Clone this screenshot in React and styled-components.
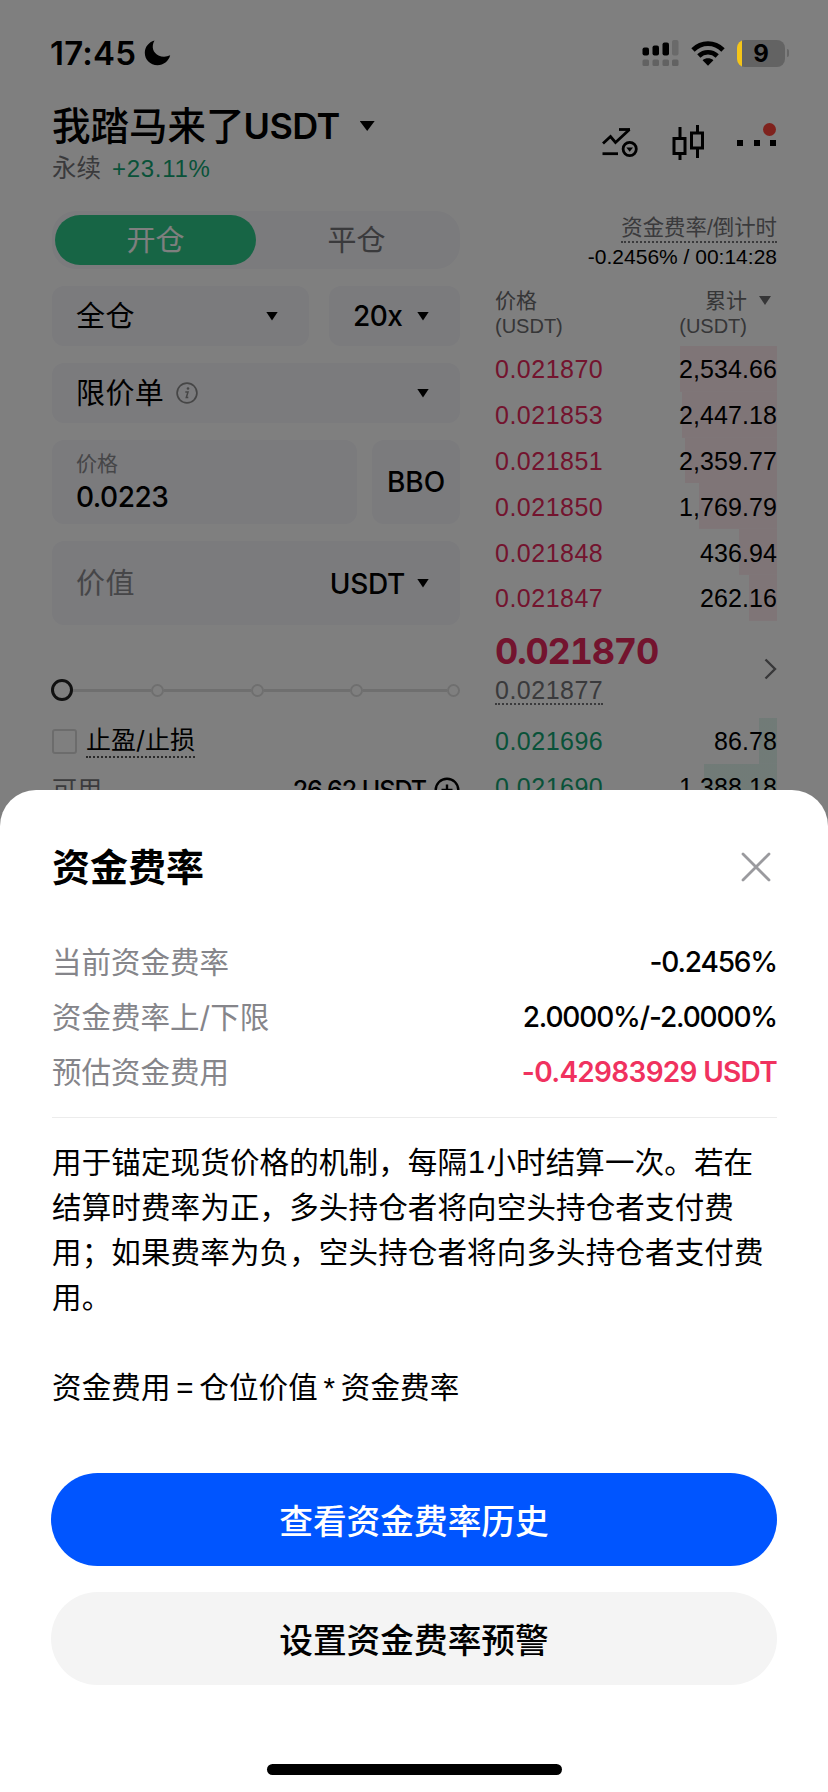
import React from 'react'
import styled, { createGlobalStyle } from 'styled-components'

const asks = [
    { price: '0.021870', total: '2,534.66', depth: 97 },
    { price: '0.021853', total: '2,447.18', depth: 95 },
    { price: '0.021851', total: '2,359.77', depth: 92 },
    { price: '0.021850', total: '1,769.79', depth: 78 },
    { price: '0.021848', total: '436.94', depth: 38 },
    { price: '0.021847', total: '262.16', depth: 28 },
]

const bids = [
    { price: '0.021696', total: '86.78', depth: 18 },
    { price: '0.021690', total: '1,388.18', depth: 73 },
]

function App() {
    return (
        <Screen>
            <GlobalStyle />
            <StatusBar />
            <Header />
            <Body>
                <OrderForm />
                <OrderBook />
            </Body>
            <Overlay />
            <StatusIcons />
            <FundingSheet />
        </Screen>
    )
}

export default App

function StatusBar() {
    return (
        <Status>
            <Clock>17:45</Clock>
            <svg width="27" height="26" viewBox="0 0 27 26">
                <path d="M10.5 0.6C7 6.5 9 13 14.5 15.5C18.500 17.300 22.500 17 26.200 15.300C24.600 21.300 19.600 25.200 13.500 25.200C6.200 25.200 0.800 19.800 0.800 12.800C0.800 7.200 4.600 2.300 10.500 0.600Z" fill="#000" />
            </svg>
        </Status>
    )
}

function StatusIcons() {
    return (
        <StatusRight>
            <svg width="37" height="28" viewBox="0 0 37 28">
                <rect x="0.500" y="8.500" width="6.500" height="8" rx="2" fill="#000" />
                <rect x="10.500" y="6.500" width="6.500" height="10" rx="2" fill="#000" />
                <rect x="20.500" y="3.500" width="6.500" height="13" rx="2" fill="#000" />
                <rect x="30" y="1" width="6.500" height="15.500" rx="2" fill="#6a6a6a" />
                <rect x="0.500" y="20.500" width="6.500" height="6.500" rx="1.500" fill="#626262" />
                <rect x="10.500" y="20.500" width="6.500" height="6.500" rx="1.500" fill="#626262" />
                <rect x="20.500" y="20.500" width="6.500" height="6.500" rx="1.500" fill="#626262" />
                <rect x="30" y="20.500" width="6.500" height="6.500" rx="1.500" fill="#626262" />
            </svg>
            <svg width="34" height="25" viewBox="0 0 34 25">
                <path d="M2 9C10.500 0.600 23.500 0.600 32 9" fill="none" stroke="#000" strokeWidth="4.800" />
                <path d="M7.800 15C13 10 21 10 26.200 15" fill="none" stroke="#000" strokeWidth="4.600" />
                <path d="M11.600 19.200C14.700 16.600 19.300 16.600 22.400 19.200L17 24.800Z" fill="#000" />
            </svg>
            <Battery>
                <BatteryBox><span>9</span></BatteryBox>
                <BatteryNub />
            </Battery>
        </StatusRight>
    )
}

function Header() {
    return (
        <Top>
            <div>
                <Pair>
                    我踏马来了<b>USDT</b>
                    <Caret $w={15} $h={10} />
                </Pair>
                <PairInfo>
                    永续<Change>+23.11%</Change>
                </PairInfo>
            </div>
            <HeaderIcons>
                <svg width="38" height="32" viewBox="0 0 38 32" fill="none" stroke="#000" strokeWidth="2.800">
                    <path d="M2 16.500L9.500 9.500L14.500 15.500L28.500 2.500" />
                    <path d="M18 2.500H29" />
                    <path d="M1.500 26.700H17" />
                    <circle cx="28.700" cy="22" r="6.600" />
                    <path d="M25.300 20.500H32L28.700 24.700Z" fill="#000" stroke="none" />
                </svg>
                <svg width="33" height="36" viewBox="0 0 33 36" fill="none" stroke="#000" strokeWidth="3">
                    <rect x="2" y="13.500" width="11" height="15" />
                    <path d="M8 2V13.500M8 28.500V35" />
                    <rect x="19.500" y="8" width="11" height="15" />
                    <path d="M25.500 0V8M25.500 23V33" />
                </svg>
                <More>
                    <i /><i /><i />
                    <RedDot />
                </More>
            </HeaderIcons>
        </Top>
    )
}

function OrderForm() {
    return (
        <Form>
            <Tabs>
                <Tab $active>开仓</Tab>
                <Tab>平仓</Tab>
            </Tabs>
            <FieldRow>
                <Field $w={257} $h={60}>
                    <FieldText>全仓</FieldText>
                    <Caret $w={12} $h={9} $end={6} />
                </Field>
                <Field $w={131} $h={60}>
                    <Digits>20x</Digits>
                    <Caret $w={12} $h={9} $end={6} />
                </Field>
            </FieldRow>
            <FieldRow>
                <Field $w={408} $h={60}>
                    <FieldText>限价单</FieldText>
                    <Info width="22" height="22" viewBox="0 0 22 22">
                        <circle cx="11" cy="11" r="9.900" fill="none" stroke="#8c8c8c" strokeWidth="1.700" />
                        <circle cx="12" cy="6.500" r="1.300" fill="#8c8c8c" />
                        <path d="M9.300 10H12L10.300 15.600H12.300" fill="none" stroke="#8c8c8c" strokeWidth="1.500" />
                    </Info>
                    <Caret $w={12} $h={9} $end={6} />
                </Field>
            </FieldRow>
            <FieldRow>
                <Field $w={305} $h={84}>
                    <PriceInput>
                        <label>价格</label>
                        <Digits>0.0223</Digits>
                    </PriceInput>
                </Field>
                <Field $w={88} $h={84} $center>BBO</Field>
            </FieldRow>
            <FieldRow>
                <Field $w={408} $h={84}>
                    <Placeholder>价值</Placeholder>
                    <Unit>USDT</Unit>
                    <Caret $w={12} $h={9} $end={6} />
                </Field>
            </FieldRow>
            <Slider>
                <Thumb />
                <Track $grow={0.91} /><Stop />
                <Track $grow={1} /><Stop />
                <Track $grow={1} /><Stop />
                <Track $grow={0.98} /><Stop />
            </Slider>
            <TpSl>
                <Checkbox />
                <Dotted>止盈/止损</Dotted>
            </TpSl>
            <Available>
                <span>可用</span>
                <strong>26.62 USDT</strong>
                <svg width="26" height="26" viewBox="0 0 26 26" fill="none" stroke="#000" strokeWidth="2.400">
                    <circle cx="13" cy="13" r="11.300" />
                    <path d="M13 7.500V18.500M7.500 13H18.500" />
                </svg>
            </Available>
        </Form>
    )
}

function OrderBook() {
    return (
        <Book>
            <RateLabel><span>资金费率/倒计时</span></RateLabel>
            <RateValue>-0.2456% / 00:14:28</RateValue>
            <BookHead>
                <div>价格<br /><em>(USDT)</em></div>
                <TotalHead>
                    <div>累计<br /><em>(USDT)</em></div>
                    <Caret $w={12} $h={9} $color="#6c6c6f" />
                </TotalHead>
            </BookHead>
            {asks.map((row) => (
                <BookRow key={row.price} $depth={row.depth} $tint="rgba(245,50,95,0.1)">
                    <Price $color="#e6285c">{row.price}</Price>
                    <span>{row.total}</span>
                </BookRow>
            ))}
            <LastPrice>
                <div>
                    <Last>0.021870</Last>
                    <Mark>0.021877</Mark>
                </div>
                <svg width="13" height="22" viewBox="0 0 13 22" fill="none" stroke="#707073" strokeWidth="2.400">
                    <path d="M1.500 1.500L11 11L1.500 20.500" />
                </svg>
            </LastPrice>
            {bids.map((row) => (
                <BookRow key={row.price} $depth={row.depth} $tint="rgba(20,180,125,0.12)">
                    <Price $color="#12a573">{row.price}</Price>
                    <span>{row.total}</span>
                </BookRow>
            ))}
        </Book>
    )
}

function FundingSheet() {
    return (
        <Sheet>
            <SheetHead>
                <h2>资金费率</h2>
                <svg width="30" height="30" viewBox="0 0 30 30" fill="none" stroke="#9a9a9e" strokeWidth="2.800" strokeLinecap="round">
                    <path d="M2 2L28 28M28 2L2 28" />
                </svg>
            </SheetHead>
            <Details>
                <DetailRow>
                    <Label>当前资金费率</Label>
                    <Value>-0.2456%</Value>
                </DetailRow>
                <DetailRow>
                    <Label>资金费率上/下限</Label>
                    <Value>2.0000%/-2.0000%</Value>
                </DetailRow>
                <DetailRow>
                    <Label>预估资金费用</Label>
                    <Value $fee>-0.42983929 USDT</Value>
                </DetailRow>
            </Details>
            <Description>
                用于锚定现货价格的机制，每隔1小时结算一次。若在<br />
                结算时费率为正，多头持仓者将向空头持仓者支付费<br />
                用；如果费率为负，空头持仓者将向多头持仓者支付费<br />
                用。
            </Description>
            <Formula>资金费用 = 仓位价值 * 资金费率</Formula>
            <Actions>
                <PrimaryButton>查看资金费率历史</PrimaryButton>
                <SecondaryButton>设置资金费率预警</SecondaryButton>
            </Actions>
            <HomeBar />
        </Sheet>
    )
}

const GlobalStyle = createGlobalStyle`
    * {
        box-sizing: border-box;
    }
    body {
        margin: 0;
        background: #fff;
        font-family: Inter, "Noto Sans CJK SC", sans-serif;
    }
    svg {
        display: block;
        flex: none;
    }
`

const numberFont = '"Liberation Sans", "Noto Sans CJK SC", sans-serif'

const Screen = styled.div`
    position: relative;
    width: 828px;
    height: 1792px;
    overflow: hidden;
    background: #fff;
    color: #000;
`

const Overlay = styled.div`
    position: absolute;
    inset: 0;
    background: rgba(0, 0, 0, 0.5);
`

const Status = styled.div`
    display: flex;
    align-items: center;
    height: 106px;
    padding-left: 50px;
    gap: 8px;
`

const Clock = styled.span`
    width: 86px;
    font-size: 33px;
    font-weight: 600;
    letter-spacing: 0.2px;
    white-space: nowrap;
`

/* sits above the dimmer so the battery keeps its bright fill */
const StatusRight = styled.div`
    position: absolute;
    top: 38px;
    right: 39px;
    height: 30px;
    display: flex;
    align-items: center;
    gap: 12px;
`

const Battery = styled.div`
    display: flex;
    align-items: center;
    gap: 2px;
`

const BatteryBox = styled.div`
    width: 48px;
    height: 27px;
    border-radius: 8px;
    background: linear-gradient(90deg, #f5c518 4.500px, #636363 4.500px);
    text-align: center;
    font-size: 24px;
    line-height: 27px;
    font-weight: 700;
`

const BatteryNub = styled.div`
    width: 2px;
    height: 8px;
    border-radius: 0 2px 2px 0;
    background: #666;
`

const Top = styled.div`
    display: flex;
    justify-content: space-between;
    height: 105px;
    padding: 0 51px 0 52px;
`

const Pair = styled.div`
    display: flex;
    align-items: center;
    height: 40px;
    font-size: 38.500px;
    line-height: 40px;
    font-weight: 500;

    b {
        font-size: 36px;
        font-weight: 600;
        margin: 0 20px 0 -1px;
        letter-spacing: -0.6px;
    }
`

const PairInfo = styled.div`
    margin-top: 7px;
    font-size: 24.500px;
    line-height: 30px;
    color: #747478;
`

const Change = styled.span`
    margin-left: 11px;
    font-family: ${numberFont};
    font-size: 24px;
    letter-spacing: 0.7px;
    color: #12a573;
`

const Caret = styled.i`
    flex: none;
    width: ${(p) => p.$w}px;
    height: ${(p) => p.$h}px;
    margin-right: ${(p) => p.$end || 0}px;
    background: ${(p) => p.$color || '#000'};
    clip-path: polygon(0 0, 100% 0, 50% 100%);
`

const HeaderIcons = styled.div`
    display: flex;
    align-items: center;
    height: 73px;
    gap: 32.500px;
`

const More = styled.div`
    position: relative;
    display: flex;
    justify-content: space-between;
    width: 39px;
    margin-right: 1px;

    i {
        width: 6px;
        height: 6px;
        background: #000;
    }
`

const RedDot = styled.div`
    position: absolute;
    right: 0;
    top: -17px;
    width: 13px;
    height: 13px;
    border-radius: 50%;
    background: #ff453a;
`

const Body = styled.div`
    display: flex;
    justify-content: space-between;
    padding: 0 51px 0 52px;
`

const Form = styled.div`
    width: 408px;
`

const Tabs = styled.div`
    display: flex;
    height: 58px;
    padding: 4px 3px;
    border-radius: 24px;
    background: #f6f6fa;
    margin-bottom: 17px;
`

const Tab = styled.div`
    flex: 1;
    height: 50px;
    border-radius: 25px;
    text-align: center;
    font-size: 29px;
    line-height: 51px;
    color: ${(p) => (p.$active ? '#fff' : '#747478')};
    background: ${(p) => (p.$active ? '#2fcb8b' : 'transparent')};
`

const FieldRow = styled.div`
    display: flex;
    justify-content: space-between;
    margin-bottom: 17px;
`

const Field = styled.div`
    display: flex;
    align-items: center;
    justify-content: ${(p) => (p.$center ? 'center' : 'flex-start')};
    width: ${(p) => p.$w}px;
    height: ${(p) => p.$h}px;
    padding: ${(p) => (p.$center ? 0 : '0 25px 0 24px')};
    border-radius: 12px;
    background: #f6f6fb;
    font-size: ${(p) => (p.$center ? 28 : 29)}px;
    line-height: 42px;
    font-weight: ${(p) => (p.$center ? 500 : 400)};

    > ${Caret} {
        margin-left: auto;
    }
`

const FieldText = styled.span`
    padding-top: 2px;
    letter-spacing: 0.400px;
`

const Info = styled.svg`
    margin-left: 12px;
`

const PriceInput = styled.div`
    display: flex;
    flex-direction: column;
    padding-bottom: 3px;

    label {
        font-size: 21px;
        line-height: 32px;
        color: #8c8c90;
    }
`

const Digits = styled.span`
    font-size: 28px;
    line-height: 34px;
    font-weight: 500;
    letter-spacing: -0.5px;
`

const Placeholder = styled(FieldText)`
    flex: 1;
    color: #8c8c90;
`

const Unit = styled.span`
    padding-top: 2px;
    margin-right: 12px;
    font-size: 28px;
    font-weight: 500;
    letter-spacing: -0.3px;
`

const Slider = styled.div`
    display: flex;
    align-items: center;
    height: 22px;
    margin-top: 54px;
`

const Thumb = styled.div`
    width: 22px;
    height: 22px;
    margin-left: -1px;
    border: 3px solid #222;
    border-radius: 50%;
`

const Track = styled.div`
    flex: ${(p) => p.$grow};
    height: 3px;
    background: #dedede;
`

const Stop = styled.div`
    width: 13px;
    height: 13px;
    border: 2px solid #dedede;
    border-radius: 50%;
`

const TpSl = styled.div`
    display: flex;
    align-items: center;
    height: 30px;
    margin-top: 25px;
    font-size: 25px;
`

const Checkbox = styled.div`
    width: 25px;
    height: 25px;
    margin-right: 9px;
    border: 2px solid #d9d9d9;
    border-radius: 3px;
`

const Dotted = styled.span`
    line-height: 31px;
    border-bottom: 2px dotted #555;
`

const Available = styled.div`
    display: flex;
    align-items: center;
    height: 30px;
    margin-top: 19px;
    font-size: 25px;
    line-height: 30px;
    color: #747478;

    strong {
        margin: 0 8px 0 auto;
        color: #000;
        font-weight: 500;
        letter-spacing: -1px;
    }
`

const Book = styled.div`
    width: 282px;
    font-family: ${numberFont};
`

const RateLabel = styled.div`
    height: 32px;
    padding-top: 5px;
    text-align: right;
    font-size: 21.400px;
    line-height: 25px;
    color: #747478;

    span {
        display: inline-block;
        border-bottom: 2px dotted #747478;
    }
`

const RateValue = styled.div`
    text-align: right;
    font-size: 21px;
    line-height: 26px;
    margin-top: 1px;
    white-space: nowrap;
`

const BookHead = styled.div`
    display: flex;
    justify-content: space-between;
    height: 58px;
    margin: 18px 0 0;
    font-size: 21px;
    line-height: 25px;
    color: #6c6c6f;

    em {
        font-style: normal;
        font-size: 20px;
    }
`

const TotalHead = styled.div`
    display: flex;
    margin-right: 6px;
    gap: 12px;
    text-align: right;

    ${Caret} {
        margin-top: 8px;
    }
`

const BookRow = styled.div`
    display: flex;
    align-items: center;
    justify-content: space-between;
    height: 45.800px;
    padding-top: 2px;
    font-size: 25px;
    letter-spacing: 0.1px;
    background: linear-gradient(${(p) => p.$tint}, ${(p) => p.$tint}) right / ${(p) => p.$depth}px 100% no-repeat;
`

const Price = styled.span`
    letter-spacing: 0.5px;
    color: ${(p) => p.$color};
`

const LastPrice = styled.div`
    display: flex;
    align-items: center;
    justify-content: space-between;
    height: 97px;
`

const Last = styled.div`
    margin-top: -4px;
    font-family: Inter, sans-serif;
    font-feature-settings: "tnum";
    font-size: 36px;
    line-height: 44px;
    font-weight: 700;
    letter-spacing: -1.2px;
    color: #e6285c;
`

const Mark = styled.span`
    display: inline-block;
    margin-top: 5px;
    font-size: 25px;
    line-height: 25px;
    letter-spacing: 0.5px;
    color: #747478;
    border-bottom: 2px dotted #747478;
`

const Sheet = styled.div`
    position: absolute;
    left: 0;
    right: 0;
    bottom: 0;
    height: 1002px;
    padding: 52px 51px 0 52px;
    border-radius: 36px 36px 0 0;
    background: #fff;
`

const SheetHead = styled.div`
    display: flex;
    align-items: center;
    justify-content: space-between;
    height: 50px;
    padding-right: 6px;

    h2 {
        margin: 0;
        font-size: 38px;
        line-height: 46px;
        font-weight: 700;
    }
`

const Details = styled.div`
    margin-top: 42px;
    padding-bottom: 18px;
    border-bottom: 1px solid #ececec;
    margin-bottom: 22px;
`

const DetailRow = styled.div`
    display: flex;
    align-items: center;
    justify-content: space-between;
    height: 55px;
`

const Label = styled.span`
    font-size: 29.500px;
    line-height: 40px;
    color: #85858a;
`

const Value = styled.span`
    padding-top: 1px;
    font-size: 28px;
    line-height: 36px;
    font-weight: ${(p) => (p.$fee ? 600 : 500)};
    letter-spacing: ${(p) => (p.$fee ? -0.700 : -1.150)}px;
    color: ${(p) => (p.$fee ? '#f0325f' : '#000')};
`

const Description = styled.p`
    margin: 0 0 45px;
    font-size: 29.500px;
    line-height: 45px;
    letter-spacing: 0.150px;
    font-feature-settings: "tnum";
    white-space: nowrap;
`

const Formula = styled(Description)`
    font-family: ${numberFont};
    word-spacing: -2.700px;
`

const Actions = styled.div`
    display: flex;
    flex-direction: column;
    gap: 26px;
    margin: 63px 0 0 -1px;
`

const PrimaryButton = styled.button`
    height: 93px;
    padding: 0 0 1px;
    border: none;
    border-radius: 47px;
    background: #0055ff;
    color: #fff;
    font-family: inherit;
    font-size: 33.700px;
    font-weight: 500;
`

const SecondaryButton = styled(PrimaryButton)`
    background: #f4f4f4;
    color: #000;
`

const HomeBar = styled.div`
    width: 295px;
    height: 11px;
    margin: 79px auto 0;
    border-radius: 6px;
    background: #000;
`
